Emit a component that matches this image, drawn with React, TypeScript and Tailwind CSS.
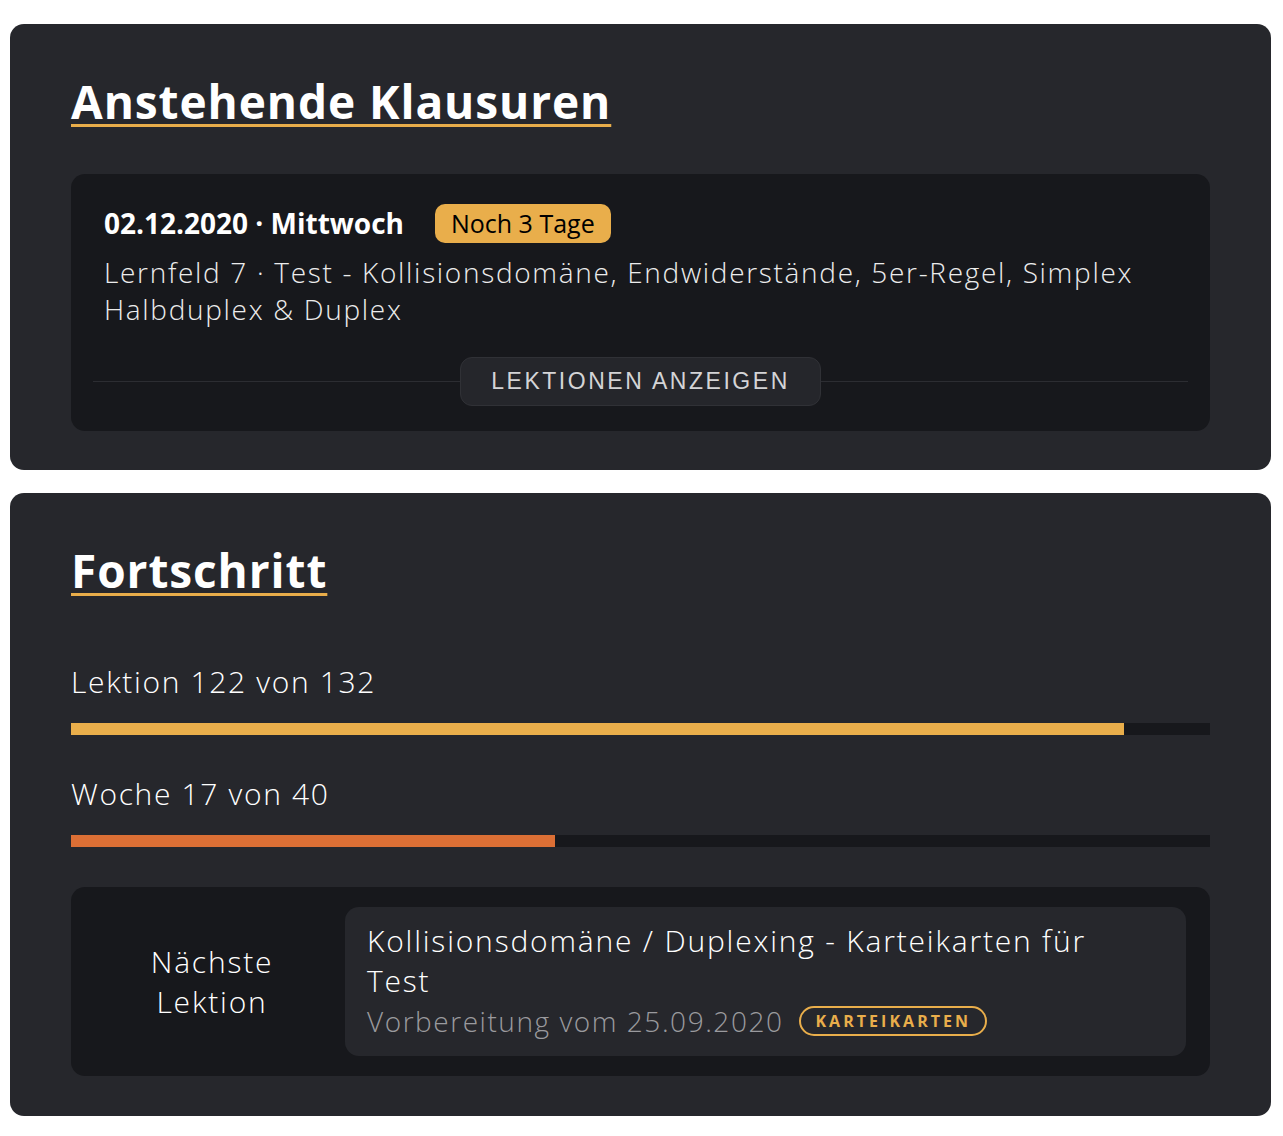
export default function App() {
  return (
    <div className="min-h-screen bg-white pt-[24px] pl-[10px] pb-[20px] font-['Open_Sans',sans-serif]">
      <div className="flex w-[1261px] flex-col gap-[23px]">
        {/* Anstehende Klausuren */}
        <section className="rounded-[14px] bg-[#26272c] px-[61px] pt-[49px] pb-[39px]">
          <h2 className="text-[46px] leading-[56px] font-bold tracking-[0.02em] text-white underline decoration-[#e8ad4a] decoration-[3px] underline-offset-[5px]">
            Anstehende Klausuren
          </h2>
          <div className="mt-[45px] rounded-[14px] bg-[#17181c] px-[22px] pt-[30px] pb-[25px]">
            <div className="px-[11px]">
              <div className="flex h-[39px] items-center gap-[31px]">
                <span className="text-[28px] leading-[39px] font-bold text-white">02.12.2020 · Mittwoch</span>
                <span className="rounded-[10px] bg-[#e9ae4b] px-[16px] text-[25px] leading-[39px] text-black">
                  Noch 3 Tage
                </span>
              </div>
              <p className="mt-[11px] text-[28px] leading-[37px] font-light tracking-[0.06em] text-[#ececec]">
                Lernfeld 7 · Test - Kollisionsdomäne, Endwiderstände, 5er-Regel, Simplex Halbduplex &amp; Duplex
              </p>
            </div>
            <div className="mt-[29px] flex items-center">
              <div className="h-px flex-1 bg-[#2c2d32]" />
              <button className="rounded-[12px] border border-[#303136] bg-[#25262b] px-[30px] font-['Liberation_Sans',sans-serif] text-[23px] leading-[47px] tracking-[0.11em] text-[#d4d4d6]">
                LEKTIONEN ANZEIGEN
              </button>
              <div className="h-px flex-1 bg-[#2c2d32]" />
            </div>
          </div>
        </section>

        {/* Fortschritt */}
        <section className="rounded-[14px] bg-[#26272c] px-[61px] pt-[49px] pb-[40px]">
          <h2 className="inline-block text-[46px] leading-[56px] font-bold tracking-[0.02em] text-white underline decoration-[#e8ad4a] decoration-[3px] underline-offset-[5px]">
            Fortschritt
          </h2>
          <div className="mt-[64px] text-[30px] leading-[40px] font-light tracking-[0.055em] text-white">
            Lektion 122 von 132
          </div>
          <div className="mt-[21px] h-[12px] bg-[#17181c]">
            <div className="h-full bg-[#e9ae4b]" style={{ width: `${(122 / 132) * 100}%` }} />
          </div>
          <div className="mt-[39px] text-[30px] leading-[40px] font-light tracking-[0.055em] text-white">
            Woche 17 von 40
          </div>
          <div className="mt-[21px] h-[12px] bg-[#17181c]">
            <div className="h-full bg-[#dc6f35]" style={{ width: `${(17 / 40) * 100}%` }} />
          </div>

          <div className="mt-[40px] flex items-center rounded-[14px] bg-[#17181c] py-[20px] pr-[24px]">
            <div className="w-[274px] pl-[8px] text-center text-[30px] leading-[40px] font-light tracking-[0.06em] text-white">
              Nächste
              <br />
              Lektion
            </div>
            <div className="flex-1 rounded-[14px] bg-[#26272c] pt-[14px] pr-[60px] pb-[15px] pl-[22px]">
              <div className="text-[30px] leading-[40px] font-light tracking-[0.06em] text-white">
                Kollisionsdomäne / Duplexing - Karteikarten für Test
              </div>
              <div className="flex items-center gap-[16px]">
                <span className="text-[28px] leading-[40px] font-light tracking-[0.055em] text-[#9a9a9e]">
                  Vorbereitung vom 25.09.2020
                </span>
                <span className="rounded-full border-2 border-[#e9ae4b] px-[14px] text-[16px] leading-[26px] font-bold tracking-[0.19em] text-[#e9ae4b]">
                  KARTEIKARTEN
                </span>
              </div>
            </div>
          </div>
        </section>
      </div>
    </div>
  );
}
